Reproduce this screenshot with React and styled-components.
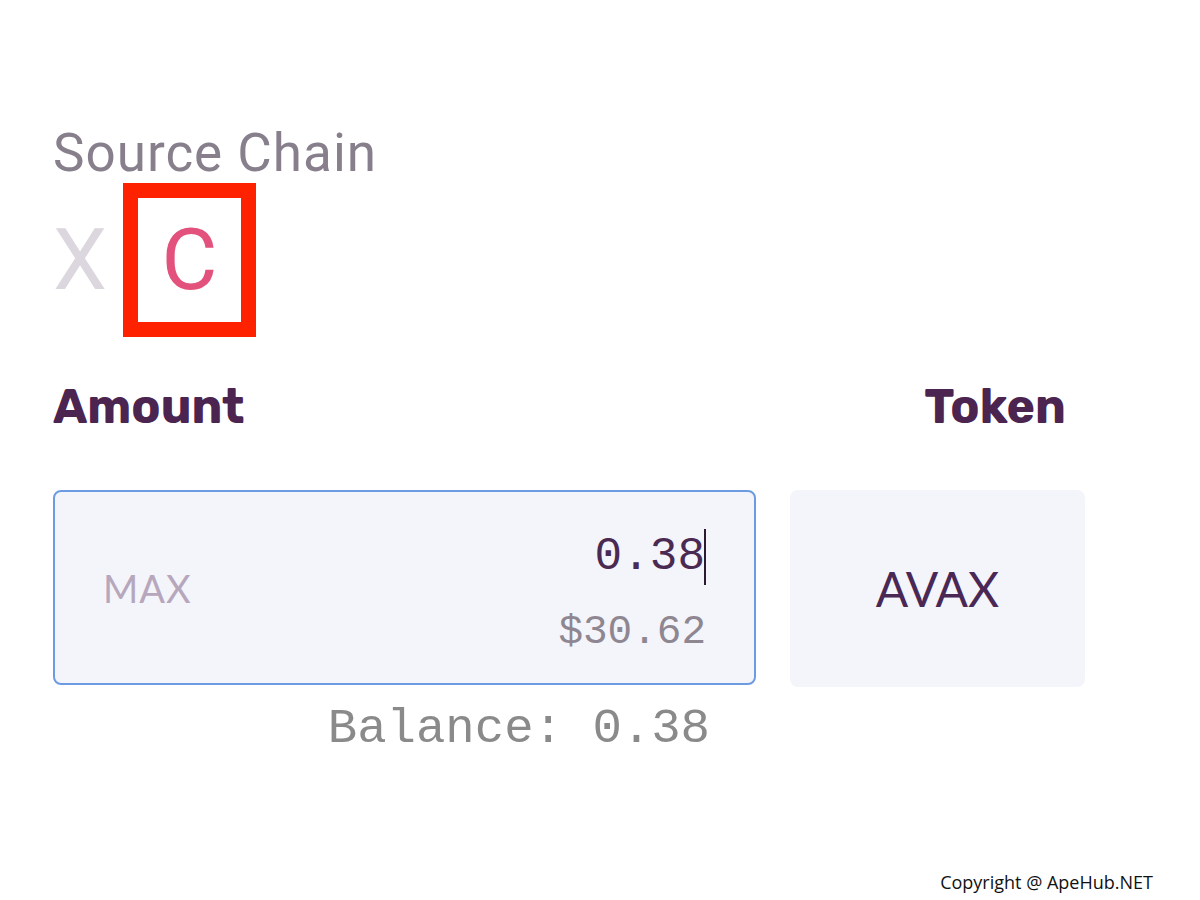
import React from 'react';
import styled, { createGlobalStyle } from 'styled-components';

const GlobalStyle = createGlobalStyle`
  body {
    margin: 0;
    background: #ffffff;
  }
`;

export default () => {
    return (
        <Page>
            <GlobalStyle />
            <Form>
                <SourceLabel>Source Chain</SourceLabel>
                <ChainTabs>
                    <ChainTab>X</ChainTab>
                    <ChainTab active highlighted>C</ChainTab>
                </ChainTabs>
                <Grid>
                    <FieldLabel>Amount</FieldLabel>
                    <FieldLabel align="right">Token</FieldLabel>
                    <AmountBox>
                        <MaxButton>MAX</MaxButton>
                        <Values>
                            <Value>
                                0.38<Caret />
                            </Value>
                            <UsdValue>$30.62</UsdValue>
                        </Values>
                    </AmountBox>
                    <TokenBox>AVAX</TokenBox>
                    <Balance>Balance: 0.38</Balance>
                </Grid>
            </Form>
            <Footer>Copyright @ ApeHub.NET</Footer>
        </Page>
    );
};

const Page = styled.div`
width: 1200px;
height: 900px;
box-sizing: border-box;
display: flex;
flex-direction: column;
padding: 0 47px 6px 53px;
`

const Form = styled.div`
padding-top: 124px;
width: 1032px;
`

const SourceLabel = styled.div`
font-family: Roboto, sans-serif;
font-size: 53px;
letter-spacing: 1px;
line-height: 59px;
color: #877f8c;
`

const ChainTabs = styled.div`
display: flex;
align-items: center;
gap: 16px;
height: 154px;
`

const ChainTab = styled.div`
font-family: Roboto, sans-serif;
font-size: 86px;
line-height: 1;
color: ${p => (p.active ? '#e2527d' : '#dcd6de')};
${p => p.highlighted && `
    box-sizing: border-box;
    width: 133px;
    height: 154px;
    border: 15px solid #ff2200;
    display: flex;
    align-items: center;
    justify-content: center;
`}
`

const Grid = styled.div`
display: grid;
grid-template-columns: 703px 295px;
column-gap: 34px;
margin-top: 40px;
`

const FieldLabel = styled.div`
font-family: Rubik, Roboto, sans-serif;
font-weight: 700;
font-size: 48px;
line-height: 60px;
color: #4b2450;
text-align: ${p => p.align || 'left'};
padding-right: ${p => (p.align === 'right' ? '19px' : '0')};
margin-bottom: 53px;
`

const AmountBox = styled.div`
box-sizing: border-box;
height: 195px;
border: 2px solid #6d9be2;
border-radius: 8px;
background: #f4f5fa;
display: flex;
align-items: center;
justify-content: space-between;
padding: 0 48px;
`

const MaxButton = styled.span`
font-family: Lato, sans-serif;
font-size: 38px;
color: #b7a7bd;
letter-spacing: 1px;
`

const Values = styled.div`
display: flex;
flex-direction: column;
align-items: flex-end;
gap: 25px;
padding-top: 7px;
`

const Value = styled.div`
font-family: "Liberation Mono", monospace;
font-size: 46px;
line-height: 56px;
color: #4a2a52;
display: flex;
align-items: center;
`

const Caret = styled.span`
display: inline-block;
width: 2px;
height: 56px;
background: #2b1a30;
margin-left: -1px;
`

const UsdValue = styled.div`
font-family: "Liberation Mono", monospace;
font-size: 41px;
line-height: 44px;
color: #8e8791;
`

const TokenBox = styled.div`
height: 197px;
border-radius: 8px;
background: #f4f5fa;
display: flex;
align-items: center;
justify-content: center;
font-family: Lato, sans-serif;
font-size: 48px;
color: #4a2856;
`

const Balance = styled.div`
grid-column: 1;
text-align: right;
padding-right: 46px;
margin-top: 14px;
font-family: "Liberation Mono", monospace;
font-size: 49px;
line-height: 56px;
color: #8a8a8a;
`

const Footer = styled.div`
margin-top: auto;
align-self: flex-end;
font-family: "Open Sans", sans-serif;
font-size: 18px;
color: #111111;
`
